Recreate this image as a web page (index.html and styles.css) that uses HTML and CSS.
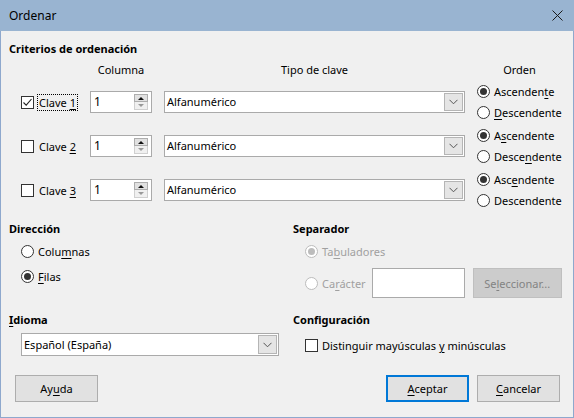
FILE: index.html
```html
<!DOCTYPE html>
<html lang="es">
<head>
<meta charset="utf-8">
<title>Ordenar</title>
<link rel="stylesheet" href="styles.css">
</head>
<body>
<div class="window">
  <div class="titlebar">
    <span class="title">Ordenar</span>
    <svg class="close" width="11" height="11" viewBox="0 0 11 11"><path d="M0.5 0.5 L10.5 10.5 M10.5 0.5 L0.5 10.5" stroke="#1a1a1a" stroke-width="1" fill="none"/></svg>
  </div>
  <div class="content">
    <h2 class="heading">Criterios de ordenación</h2>
    <div class="crit-grid">
      <div></div>
      <div class="colhead">Columna</div>
      <div class="colhead">Tipo de clave</div>
      <div class="colhead">Orden</div>

      <div class="keycell"><span class="check checked"><svg width="11" height="11" viewBox="0 0 11 11"><path d="M1.5 5.5 L4.2 8.2 L9.5 2" stroke="#222" stroke-width="1.1" fill="none"/></svg></span><span class="lbl focus">Clave <u>1</u></span></div>
      <div class="cellc"><div class="spin"><span class="val">1</span><span class="spinbtns"><span class="sb up"><i class="tri-up"></i></span><span class="sb down"><i class="tri-down"></i></span></span></div></div>
      <div class="cellc"><div class="combo"><span class="val">Alfanumérico</span><span class="arrow"><svg width="9" height="6" viewBox="0 0 9 6"><path d="M0.5 0.8 L4.5 4.8 L8.5 0.8" stroke="#555" stroke-width="1" fill="none"/></svg></span></div></div>
      <div class="radios"><label class="radio"><span class="rb on"></span><span>Ascenden<u>t</u>e</span></label><label class="radio"><span class="rb"></span><span><u>D</u>escendente</span></label></div>

      <div class="keycell"><span class="check"></span><span class="lbl">Clave <u>2</u></span></div>
      <div class="cellc"><div class="spin"><span class="val">1</span><span class="spinbtns"><span class="sb up"><i class="tri-up"></i></span><span class="sb down"><i class="tri-down"></i></span></span></div></div>
      <div class="cellc"><div class="combo"><span class="val">Alfanumérico</span><span class="arrow"><svg width="9" height="6" viewBox="0 0 9 6"><path d="M0.5 0.8 L4.5 4.8 L8.5 0.8" stroke="#555" stroke-width="1" fill="none"/></svg></span></div></div>
      <div class="radios"><label class="radio"><span class="rb on"></span><span>A<u>s</u>cendente</span></label><label class="radio"><span class="rb"></span><span>Desce<u>n</u>dente</span></label></div>

      <div class="keycell"><span class="check"></span><span class="lbl">Clave <u>3</u></span></div>
      <div class="cellc"><div class="spin"><span class="val">1</span><span class="spinbtns"><span class="sb up"><i class="tri-up"></i></span><span class="sb down"><i class="tri-down"></i></span></span></div></div>
      <div class="cellc"><div class="combo"><span class="val">Alfanumérico</span><span class="arrow"><svg width="9" height="6" viewBox="0 0 9 6"><path d="M0.5 0.8 L4.5 4.8 L8.5 0.8" stroke="#555" stroke-width="1" fill="none"/></svg></span></div></div>
      <div class="radios"><label class="radio"><span class="rb on"></span><span>Asc<u>e</u>ndente</span></label><label class="radio"><span class="rb"></span><span>Descendente</span></label></div>
    </div>

    <div class="two-col">
      <section class="group">
        <h2 class="heading">Dirección</h2>
        <div class="dir-list">
          <label class="radio"><span class="rb"></span><span>Colu<u>m</u>nas</span></label>
          <label class="radio"><span class="rb on"></span><span><u>F</u>ilas</span></label>
        </div>
      </section>
      <section class="group">
        <h2 class="heading">Separador</h2>
        <div class="sep-list">
          <label class="radio disabled"><span class="rb on"></span><span>Ta<u>b</u>uladores</span></label>
          <div class="sep-char">
            <label class="radio disabled"><span class="rb"></span><span>Ca<u>r</u>ácter</span></label>
            <span class="textbox"></span>
            <span class="btn disabled-btn"><span>Se<u>l</u>eccionar...</span></span>
          </div>
        </div>
      </section>
      <section class="group g2">
        <h2 class="heading"><u>I</u>dioma</h2>
        <div class="combo lang"><span class="val">Español (España)</span><span class="arrow"><svg width="9" height="6" viewBox="0 0 9 6"><path d="M0.5 0.8 L4.5 4.8 L8.5 0.8" stroke="#555" stroke-width="1" fill="none"/></svg></span></div>
      </section>
      <section class="group g2">
        <h2 class="heading">Configuración</h2>
        <label class="checkrow"><span class="check"></span><span>Distinguir mayúsculas <u>y</u> minúsculas</span></label>
      </section>
    </div>

    <div class="buttons">
      <span class="btn"><span>Ay<u>u</u>da</span></span>
      <span class="spacer"></span>
      <span class="btn default"><span><u>A</u>ceptar</span></span>
      <span class="btn"><span><u>C</u>ancelar</span></span>
    </div>
  </div>
</div>
</body>
</html>
```

FILE: styles.css
```css
* { box-sizing: border-box; }
html, body { margin: 0; padding: 0; }
body {
  width: 574px;
  height: 418px;
  overflow: hidden;
  font-family: "Noto Sans", "Open Sans", sans-serif;
  font-size: 11px;
  color: #000;
  background: #f0f0f0;
}
u { text-decoration: underline; text-underline-offset: 2px; }
.window {
  width: 574px;
  height: 418px;
  border: 1px solid #8ea8cd;
  border-top: none;
  background: #f0f0f0;
  display: flex;
  flex-direction: column;
}
.titlebar {
  height: 31px;
  margin: 0 -1px;
  background: #99b4d1;
  display: flex;
  align-items: center;
  justify-content: space-between;
  padding: 0 11px 0 9px;
  flex: none;
}
.title { font-size: 12px; line-height: 16px; }
.close { display: block; }
.content {
  padding: 10px 13px 0 7px;
  display: flex;
  flex-direction: column;
}
.heading {
  margin: 0;
  font-size: 11px;
  font-weight: bold;
  line-height: 16px;
  padding-left: 1px;
  white-space: nowrap;
}
.crit-grid {
  margin-top: 5px;
  margin-left: 13px;
  display: grid;
  grid-template-columns: 57px 62px 301px 85px;
  grid-template-rows: 17px 44px 44px 44px;
  column-gap: 12px;
  row-gap: 0;
}
.colhead { text-align: center; line-height: 16px; white-space: nowrap; }
.crit-grid > .keycell { margin-top: 2px; }
.crit-grid > .cellc { margin-top: 2px; display: flex; align-items: center; }
.crit-grid > .radios { margin-top: 2px; }
.keycell { display: flex; align-items: center; white-space: nowrap; }
.check {
  width: 13px; height: 13px;
  border: 1px solid #333;
  background: #fff;
  flex: none;
  display: flex;
  align-items: center;
  justify-content: center;
}
.check svg { display: block; }
.lbl { margin-left: 3px; padding: 0 1px; line-height: 15px; border: 1px dotted transparent; white-space: nowrap; }
.lbl.focus { border-color: #000; }
.spin {
  width: 62px; height: 22px;
  border: 1px solid #aaa;
  background: #fff;
  display: flex;
  align-items: center;
  justify-content: space-between;
  padding: 0 3px 0 3px;
}
.val { line-height: 16px; white-space: nowrap; font-size: 12px; }
.spinbtns { display: flex; flex-direction: column; }
.sb {
  width: 14px; height: 8px;
  display: flex; align-items: center; justify-content: center;
}
.sb.up { background: #e1e1e1; border: 1px solid #adadad; }
.sb.down { background: #f0f0f0; border: 1px solid #d0d0d0; border-top: none; }
.tri-up { width: 0; height: 0; border-left: 3px solid transparent; border-right: 3px solid transparent; border-bottom: 3px solid #111; }
.tri-down { width: 0; height: 0; border-left: 3px solid transparent; border-right: 3px solid transparent; border-top: 3px solid #999; }
.combo {
  width: 301px; height: 22px;
  border: 1px solid #aaa;
  background: #fff;
  display: flex;
  align-items: stretch;
  justify-content: space-between;
  padding-left: 2px;
}
.combo .val { align-self: center; font-size: 11px; }
.arrow {
  width: 19px;
  margin: 1px;
  background: #e5e5e5;
  border: 1px solid #b5b5b5;
  display: flex; align-items: center; justify-content: center;
}
.arrow svg { display: block; }
.radios { display: flex; flex-direction: column; }
.radio {
  display: flex;
  align-items: center;
  height: 22px;
  white-space: nowrap;
}
.rb {
  width: 13px; height: 13px;
  border: 1px solid #333;
  border-radius: 50%;
  background: #fff;
  margin-right: 4px;
  flex: none;
  position: relative;
}
.rb.on::after {
  content: "";
  position: absolute;
  left: 2px; top: 2px;
  width: 7px; height: 7px;
  border-radius: 50%;
  background: #333;
}
.radio.disabled { color: #a0a0a0; }
.radio.disabled .rb { border-color: #bcbcbc; }
.radio.disabled .rb.on::after { background: #bcbcbc; }
.two-col {
  margin-top: 10px;
  display: grid;
  grid-template-columns: 284px 1fr;
}
.dir-list, .sep-list { margin-top: 3px; margin-left: 13px; display: flex; flex-direction: column; gap: 3px; }
.sep-list { gap: 6px; }
.sep-char { display: flex; align-items: center; }
.textbox {
  width: 93px; height: 30px;
  margin-left: 6px;
  border: 1px solid #aaa;
  background: #fff;
}
.btn {
  height: 27px;
  width: 83px;
  border: 1px solid #adadad;
  background: #e1e1e1;
  display: flex;
  align-items: center;
  justify-content: center;
  white-space: nowrap;
}
.disabled-btn {
  margin-left: 8px;
  width: 89px; height: 30px;
  background: #cccccc;
  border-color: #bfbfbf;
  color: #838383;
}
.g2 { margin-top: 14px; }
.lang { width: 258px; height: 23px; margin-left: 13px; margin-top: 5px; }
.checkrow {
  margin-top: 6px; margin-left: 13px;
  height: 23px;
  display: flex; align-items: center;
  white-space: nowrap;
}
.checkrow .check { margin-right: 4px; }
.buttons {
  margin-top: 18px;
  margin-left: 7px;
  display: flex;
  gap: 8px;
}
.spacer { flex: 1; }
.btn.default { border: 2px solid #0078d7; }
```
